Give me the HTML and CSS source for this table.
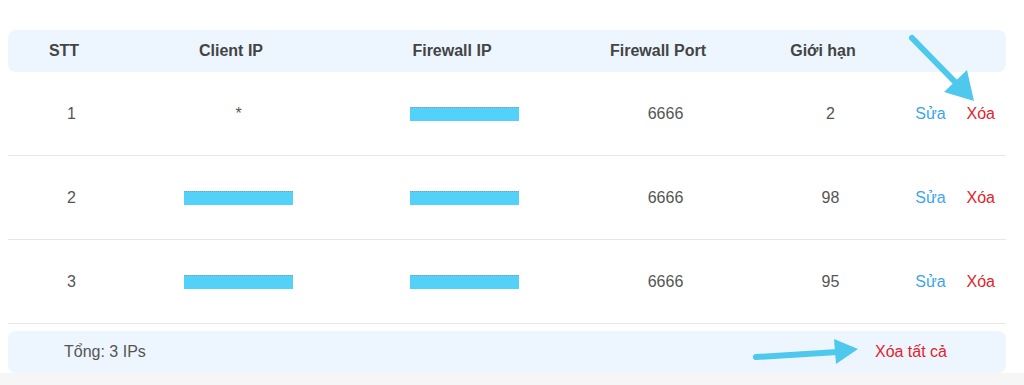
FILE: index.html
```html
<!DOCTYPE html>
<html lang="vi">
<head>
<meta charset="utf-8">
<title>Danh sách IP</title>
<link rel="stylesheet" href="styles.css">
</head>
<body>
<div class="card">
  <div class="ip-table">
    <div class="row head">
      <div class="cell">STT</div>
      <div class="cell">Client IP</div>
      <div class="cell">Firewall IP</div>
      <div class="cell">Firewall Port</div>
      <div class="cell">Giới hạn</div>
      <div class="cell"></div>
    </div>
    <div class="row body">
      <div class="cell">1</div>
      <div class="cell">*</div>
      <div class="cell"><span class="mask mask-fw"></span></div>
      <div class="cell">6666</div>
      <div class="cell">2</div>
      <div class="cell actions"><a class="edit">Sửa</a><a class="del">Xóa</a></div>
    </div>
    <div class="row body">
      <div class="cell">2</div>
      <div class="cell"><span class="mask"></span></div>
      <div class="cell"><span class="mask mask-fw"></span></div>
      <div class="cell">6666</div>
      <div class="cell">98</div>
      <div class="cell actions"><a class="edit">Sửa</a><a class="del">Xóa</a></div>
    </div>
    <div class="row body">
      <div class="cell">3</div>
      <div class="cell"><span class="mask"></span></div>
      <div class="cell"><span class="mask mask-fw"></span></div>
      <div class="cell">6666</div>
      <div class="cell">95</div>
      <div class="cell actions"><a class="edit">Sửa</a><a class="del">Xóa</a></div>
    </div>
    <div class="foot">
      <span class="total">Tổng: 3 IPs</span>
      <a class="del-all">Xóa tất cả</a>
    </div>
  </div>
  <svg class="arrows" width="1024" height="385" viewBox="0 0 1024 385" aria-hidden="true">
    <line x1="912" y1="38" x2="957" y2="84" stroke="#4fc8ee" stroke-width="6" stroke-linecap="round"/>
    <polygon points="974,101 944,92 967,70" fill="#4fc8ee"/>
    <line x1="756" y1="357" x2="838" y2="352" stroke="#4fc8ee" stroke-width="6" stroke-linecap="round"/>
    <polygon points="858,349 834,339 836,364" fill="#4fc8ee"/>
  </svg>
</div>
</body>
</html>
```
FILE: styles.css
```css
html {
  background: #f6f6f6;
}
body {
  margin: 0;
  font-family: "Liberation Sans", Arial, Helvetica, sans-serif;
  font-size: 16px;
  color: #555;
}
.card {
  position: relative;
  background: #fff;
  padding: 30px 18px 1px 8px;
  height: 342px;
}
.ip-table {
  width: 998px;
}
.row {
  display: grid;
  grid-template-columns: 112px 222px 220px 192px 138px 1fr;
  align-items: center;
}
.cell {
  text-align: center;
}
.head {
  height: 42px;
  background: #edf6ff;
  border-radius: 8px;
  font-weight: bold;
  color: #444;
}
.body {
  height: 83px;
  border-bottom: 1px solid #e6e6e6;
}
.body .cell {
  padding-left: 15px;
}
.mask {
  display: inline-block;
  vertical-align: middle;
  width: 109px;
  height: 13px;
  background: #54d1f8;
  border-top: 1px dotted #8a9aa0;
}
.mask-fw {
  margin-left: 10px;
}
.body .actions {
  display: flex;
  justify-content: flex-end;
  gap: 21px;
  padding-left: 0;
  padding-right: 11px;
}
.edit {
  color: #3ea6ea;
}
.del {
  color: #e3232b;
}
.foot {
  margin-top: 7px;
  height: 42px;
  background: #edf6ff;
  border-radius: 8px;
  display: flex;
  align-items: center;
  justify-content: space-between;
  padding: 0 59px 0 56px;
  color: #555;
}
.del-all {
  color: #e3232b;
}
.arrows {
  position: absolute;
  left: 0;
  top: 0;
  pointer-events: none;
}
```
